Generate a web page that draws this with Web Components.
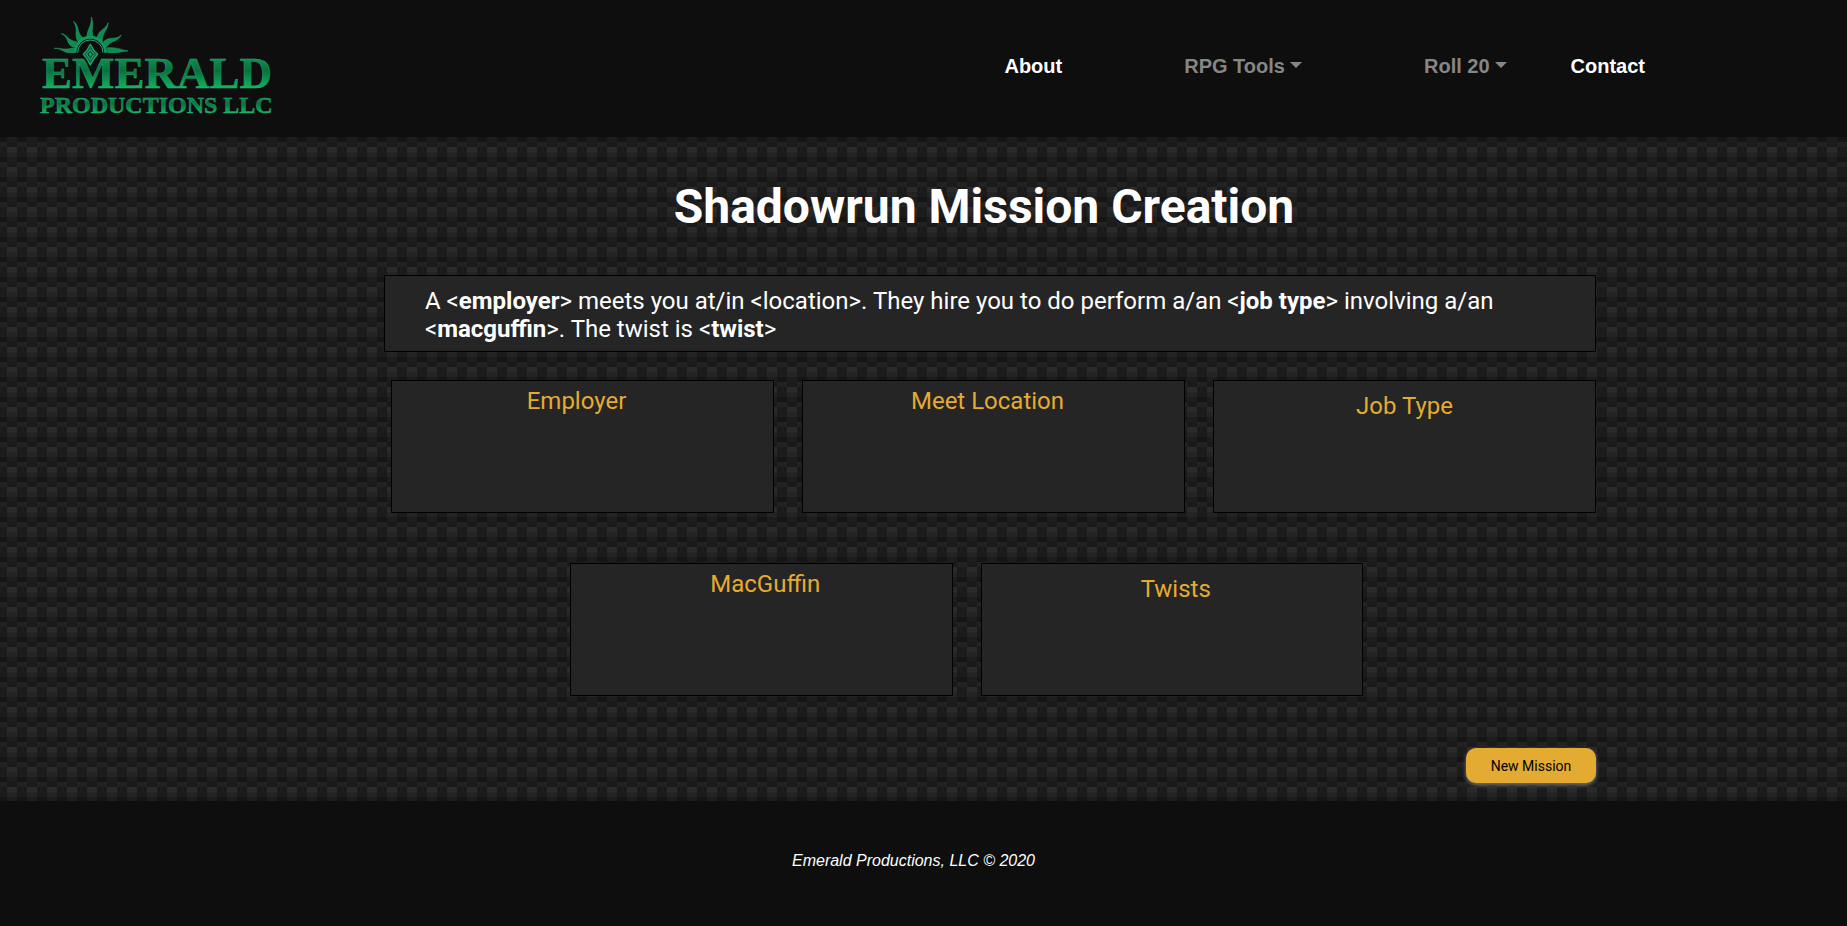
<!DOCTYPE html>
<html lang="en">
<head>
<meta charset="utf-8">
<title>Shadowrun Mission Creation</title>
<style>
  body { margin: 0; background: #0e0e0e; color: #fff; font-family: Roboto, sans-serif; }
</style>
</head>
<body>
<mission-app></mission-app>
<script>
const define = (name, html) => customElements.define(name, class extends HTMLElement {
  constructor() {
    super();
    this.attachShadow({ mode: 'open' }).innerHTML = html;
  }
});

define('brand-logo', `
<style>
  :host { display: block; }
  a, svg { display: block; }
  text { font-family: "Liberation Serif", serif; font-weight: 700; fill: url(#em); stroke: #2fae83; stroke-width: .4px; }
  .big { font-size: 45px; }
  .small { font-size: 24px; }
</style>
<a href="#" aria-label="Emerald Productions LLC home">
<svg width="260" height="110" viewBox="0 0 260 110">
  <defs>
    <linearGradient id="em" x1="0" y1="0" x2="0" y2="1">
      <stop offset=".2" stop-color="#0d9150"/><stop offset=".45" stop-color="#08703d"/><stop offset=".8" stop-color="#10b45c"/>
    </linearGradient>
  </defs>
  <g transform="translate(-1 -4) scale(.3333)">
    <g fill="#0d8c50" stroke="#2fa37c" stroke-width="1.5">
      <path d="M72 115C92 112 98 122 130 114L132 128H116C100 128 98 116 72 115Z"/>
      <path d="M94 71C112 72 112 92 140 95L132 112C108 104 118 82 94 71Z"/>
      <path d="M130 34C150 48 138 66 159 84L143 94C132 74 146 56 130 34Z"/>
      <path d="M184 21C194 44 182 56 190 82H171C170 60 186 48 184 21Z"/>
      <path d="M235 38C232 64 218 64 217 92L201 84C206 58 226 60 235 38Z"/>
      <path d="M274 75C262 98 242 90 230 111L221 95C236 78 256 92 274 75Z"/>
      <path d="M294 123C270 118 262 112 232 113L233 128H254C268 128 276 124 294 123Z"/>
    </g>
    <path d="M135 128A46 46 0 0 1 227 128" fill="none" stroke="#0f9957" stroke-width="9"/>
    <path d="M143 128A38 38 0 0 1 219 128" fill="none" stroke="#4fb39b" stroke-width="2.5"/>
  </g>
  <text class="big" x="11" y="74">EMERALD</text>
  <text class="small" x="9" y="99">PRODUCTIONS LLC</text>
  <g transform="translate(-1 -4) scale(.3333)" stroke-linejoin="round">
    <path d="M181 96L210 133L181 174L152 133Z" fill="#0e0e0e"/>
    <path d="M181 103Q190 122 203 133Q190 146 181 165Q172 146 160 133Q172 122 181 103Z" fill="#0d6b40" stroke="#22a26d" stroke-width="4"/>
    <path d="M181 119L192 133L181 149L170 133Z" fill="#0a4a2d" stroke="#43b090" stroke-width="2.5"/>
    <path d="M181 127L186 133L181 141L176 133Z" fill="#10a058"/>
  </g>
</svg>
</a>`);

define('nav-menu', `
<style>
  :host { display: block; }
  button { all: unset; display: flex; align-items: center; gap: 5px; cursor: pointer; color: #868686; }
  button::after { content: ""; border: 6px solid transparent; border-top-color: currentColor; border-bottom: 0; margin-bottom: 2px; }
</style>
<button type="button" aria-haspopup="true" aria-expanded="false"><slot></slot></button>`);

define('site-header', `
<style>
  :host { display: flex; align-items: center; justify-content: space-between; box-sizing: border-box;
    height: 137px; padding: 0 202px 0 31px; background: #0e0e0e; font: bold 20px/24px "Liberation Sans", Arial, sans-serif; }
  nav { padding-bottom: 6px; }
  ul { display: flex; list-style: none; margin: 0; padding: 0; }
  .menu { margin-left: 122px; }
  .last { margin-left: 64px; }
  a { color: #fff; text-decoration: none; }
</style>
<brand-logo></brand-logo>
<nav><ul>
  <li><a href="#about">About</a></li>
  <li class="menu"><nav-menu>RPG Tools</nav-menu></li>
  <li class="menu"><nav-menu>Roll 20</nav-menu></li>
  <li class="last"><a href="#contact">Contact</a></li>
</ul></nav>`);

define('mission-summary', `
<style>
  :host { display: block; border: 1px solid #000; background: #252525; padding: 11px 40px 8px; font-size: 24px; line-height: 28px; }
  p { margin: 0; }
</style>
<p><slot></slot></p>`);

define('mission-card', `
<style>
  :host { display: block; box-sizing: border-box; height: 133px; border: 1px solid #000; background: #252525; padding-top: 6px; }
  :host([low]) { padding-top: 11px; }
  :host([lead]) { padding-right: 12px; }
  :host([trail]) { padding-left: 8px; }
  h2 { margin: 0; color: #e4ab32; text-align: center; font-weight: 400; font-size: 24px; line-height: 28px; }
</style>
<h2><slot></slot></h2>`);

define('action-button', `
<style>
  :host { display: block; }
  button { display: block; width: 130px; height: 35px; padding: 0; border: 0; border-radius: 10px; background: #e4ab32; color: #000;
    font: 14px/16px Roboto, sans-serif; box-shadow: 0 2px 4px #777; cursor: pointer; }
</style>
<button type="button"><slot></slot></button>`);

define('site-footer', `
<style>
  :host { display: block; box-sizing: border-box; height: 125px; padding: 50px 20px 0 0; background: #0e0e0e; text-align: center;
    font: italic 16px/20px "Liberation Sans", Arial, sans-serif; }
</style>
<footer><slot></slot></footer>`);

const weave = `<svg xmlns="http://www.w3.org/2000/svg" width="20" height="20" shape-rendering="crispEdges"><path fill="#1b1b1b" d="M0 0h20v20H0z"/><path fill="#222" d="M0 5h10v5H0z"/><path fill="#151515" d="M0 0h10v5H0z"/><path fill="#1d1d1d" d="M10 0h10v5H10z"/><path fill="#1a1a1a" d="M10 5h10v5H10z"/><path fill="#2a2a2a" d="M10 10h10v5H10z"/><path fill="#242424" d="M10 15h10v5H10z"/></svg>`;

define('mission-app', `
<style>
  :host { display: flex; flex-direction: column; min-height: 100vh; }
  main { flex: 1; display: grid; grid-template-columns: 384fr 1212fr 251fr; align-content: start; box-sizing: border-box;
    padding: 42px 0 18px; background: url('data:image/svg+xml,${encodeURIComponent(weave)}') -3px 0; }
  .content { grid-column: 2; }
  h1 { margin: 0 12px 40px 0; text-align: center; font-size: 48px; line-height: 56px; }
  .row { display: grid; gap: 28px; }
  .three { grid-template-columns: repeat(3, 1fr); margin: 28px 0 50px 7px; }
  .two { grid-template-columns: repeat(2, 1fr); margin: 0 233px 52px 186px; }
  .actions { display: flex; justify-content: flex-end; }
</style>
<site-header></site-header>
<main><div class="content">
  <h1>Shadowrun Mission Creation</h1>
  <mission-summary>A &lt;<b>employer</b>&gt; meets you at/in &lt;location&gt;. They hire you to do perform a/an &lt;<b>job type</b>&gt; involving a/an &lt;<b>macguffin</b>&gt;. The twist is &lt;<b>twist</b>&gt;</mission-summary>
  <div class="row three">
    <mission-card lead>Employer</mission-card>
    <mission-card lead>Meet Location</mission-card>
    <mission-card low>Job Type</mission-card>
  </div>
  <div class="row two">
    <mission-card trail>MacGuffin</mission-card>
    <mission-card trail low>Twists</mission-card>
  </div>
  <div class="actions"><action-button>New Mission</action-button></div>
</div></main>
<site-footer>Emerald Productions, LLC © 2020</site-footer>`);
</script>
</body>
</html>
